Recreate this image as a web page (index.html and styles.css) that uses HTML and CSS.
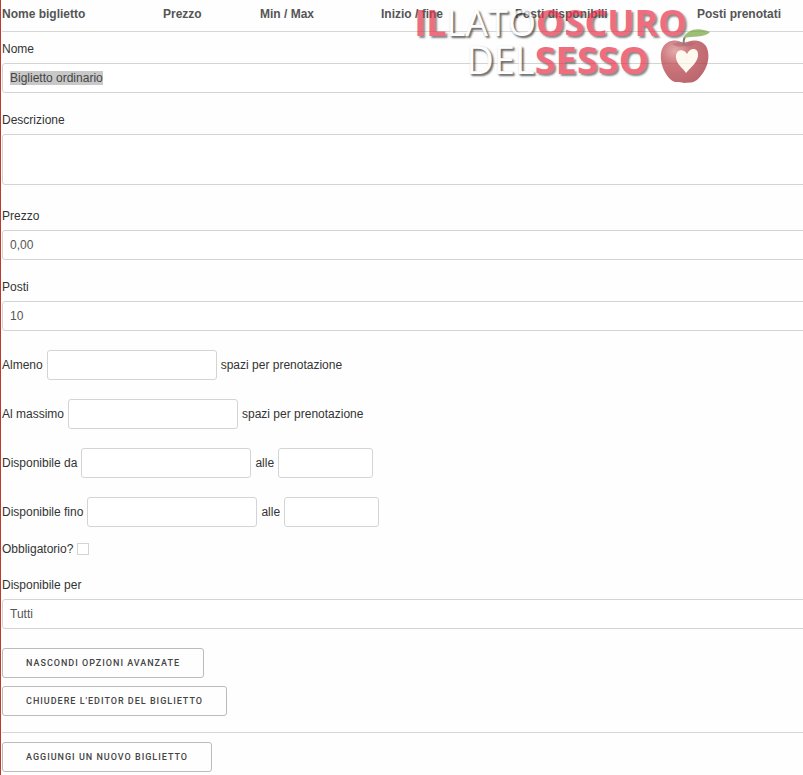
FILE: index.html
```html
<!DOCTYPE html>
<html lang="it">
<head>
  <meta charset="UTF-8">
  <meta name="viewport" content="width=device-width, initial-scale=1.0">
  <title>Biglietti</title>
  <link rel="stylesheet" href="styles.css">
</head>
<body>

  <form class="tickets">
    <table class="ticket-table">
      <thead>
        <tr>
          <th class="col-name">Nome biglietto</th>
          <th class="col-price">Prezzo</th>
          <th class="col-minmax">Min / Max</th>
          <th class="col-dates">Inizio / fine</th>
          <th class="col-available">Posti disponibili</th>
          <th>Posti prenotati</th>
        </tr>
      </thead>
      <tbody>
        <tr>
          <td colspan="6">
            <div class="field">
              <label for="ticket-name">Nome</label>
              <input type="text" id="ticket-name" value="Biglietto ordinario">
            </div>
            <div class="field">
              <label for="ticket-description">Descrizione</label>
              <textarea id="ticket-description"></textarea>
            </div>
            <div class="field">
              <label for="ticket-price">Prezzo</label>
              <input type="text" id="ticket-price" value="0,00">
            </div>
            <div class="field">
              <label for="ticket-spaces">Posti</label>
              <input type="text" id="ticket-spaces" value="10">
            </div>

            <div class="options">
              <div class="row">
                <label for="ticket-min">Almeno</label>
                <input type="text" id="ticket-min">
                <span>spazi per prenotazione</span>
              </div>
              <div class="row">
                <label for="ticket-max">Al massimo</label>
                <input type="text" id="ticket-max">
                <span>spazi per prenotazione</span>
              </div>
              <div class="row">
                <label for="ticket-start">Disponibile da</label>
                <input type="text" id="ticket-start">
                <label for="ticket-start-time">alle</label>
                <input type="text" class="time" id="ticket-start-time">
              </div>
              <div class="row">
                <label for="ticket-end">Disponibile fino</label>
                <input type="text" id="ticket-end">
                <label for="ticket-end-time">alle</label>
                <input type="text" class="time" id="ticket-end-time">
              </div>
            </div>

            <div class="row required">
              <label for="ticket-required">Obbligatorio?</label>
              <input type="checkbox" id="ticket-required">
            </div>

            <div class="field">
              <label for="ticket-type">Disponibile per</label>
              <select id="ticket-type">
                <option>Tutti</option>
              </select>
            </div>

            <div class="actions">
              <button type="button">Nascondi opzioni avanzate</button>
              <button type="button">Chiudere l'editor del biglietto</button>
            </div>
          </td>
        </tr>
      </tbody>
    </table>
    <div class="footer">
      <button type="button">Aggiungi un nuovo biglietto</button>
    </div>
  </form>

  <div class="watermark">
    <div class="mark-top"><b>IL</b><span>LATO</span><b>OSCURO</b></div>
    <div class="mark-bottom">
      <span>DEL</span><b>SESSO</b>
      <svg class="apple" width="52" height="58" viewBox="0 0 52 58" aria-hidden="true">
        <defs>
          <radialGradient id="skin" cx="30%" cy="25%" r="80%">
            <stop offset="0" stop-color="#d9888a"/>
            <stop offset="0.4" stop-color="#b83e46"/>
            <stop offset="1" stop-color="#a02530"/>
          </radialGradient>
        </defs>
        <path d="M25 16C20 11 9 11 4 19C-1 28 3 43 11 51C16 56 20 53 25 55C31 54 34 56 40 50C49 41 52 27 47 18C42 11 31 11 25 16Z" fill="url(#skin)"/>
        <path d="M13 16Q25 12 37 15Q31 20 25 18Q19 20 13 16Z" fill="#842830" opacity="0.5"/>
        <path d="M25 17Q24 12 26 9" fill="none" stroke="#5d4736" stroke-width="2"/>
        <path d="M24 10C29 1 39-1 51 4C45 10 34 8 24 10Z" fill="#75a33c"/>
        <path d="M28 26C25 20 16 21 17 30C18 37 24 40 27 45C32 39 40 33 39 26C39 20 31 19 28 26Z" fill="#fff6e8"/>
      </svg>
    </div>
  </div>

  <script>
    document.getElementById('ticket-name').select();
  </script>
</body>
</html>
```

FILE: styles.css
```css
* {
  box-sizing: border-box;
}
body {
  position: relative;
  margin: 0;
  padding-left: 1px;
  border-left: 1px solid #c0392b;
  background: #fefefe;
  color: #333;
  font-family: "Liberation Sans", Arial, sans-serif;
  font-size: 12px;
  line-height: 28px;
  overflow: hidden;
}
/* the form is wider than the panel it sits in */
.tickets {
  width: calc(100% + 16px);
  padding-bottom: 3px;
}
.ticket-table {
  width: 100%;
  border-collapse: collapse;
  table-layout: fixed;
}
.ticket-table th {
  height: 31px;
  padding: 0 0 2px;
  border-bottom: 1px solid #d6d6d6;
  color: #555;
  text-align: left;
  white-space: nowrap;
}
.ticket-table td {
  padding: 3px 0 16px;
  border-bottom: 1px solid #d6d6d6;
}
.col-name {
  width: 161px;
}
.col-price {
  width: 97px;
}
.col-minmax {
  width: 121px;
}
.col-dates {
  width: 134px;
}
.col-available {
  width: 182px;
}
.field {
  margin-bottom: 13px;
}
.field label {
  display: block;
}
input,
textarea,
select {
  display: block;
  height: 30px;
  margin: 0;
  padding: 0 7px;
  border: 1px solid #d3d5d5;
  border-radius: 3px;
  outline: none;
  background: #fff;
  color: #555;
  font: inherit;
}
.field input,
.field textarea,
.field select {
  width: 100%;
}
.field textarea {
  height: 51px;
  margin-bottom: 17px;
  resize: none;
}
select {
  appearance: none;
}
input::selection {
  background: #c8c8c8;
  color: #444;
}
.options {
  display: flex;
  flex-direction: column;
  gap: 19px;
  padding-top: 6px;
}
.row {
  display: flex;
  align-items: center;
  gap: 4px;
}
.row input {
  width: 170px;
}
.row .time {
  width: 95px;
}
.required {
  padding: 8px 0;
}
.required input {
  width: 12px;
  height: 12px;
  padding: 0;
  border-radius: 0;
  appearance: none;
}
.required input:checked {
  background: #555;
}
.actions {
  display: flex;
  flex-direction: column;
  align-items: flex-start;
  gap: 8px;
  padding-top: 6px;
}
button {
  height: 30px;
  padding: 0 23px;
  border: 1px solid #bbb;
  border-radius: 3px;
  background: #fefefe;
  color: #444;
  font-family: Roboto, sans-serif;
  font-size: 9px;
  font-weight: 500;
  letter-spacing: 1px;
  text-transform: uppercase;
  cursor: pointer;
}
.footer {
  display: flex;
  padding-top: 9px;
}
.watermark {
  position: absolute;
  top: 5px;
  right: 92px;
  color: #fefefe;
  font-family: "Open Sans", sans-serif;
  font-size: 38px;
  line-height: 36px;
  opacity: 0.7;
  text-shadow: 2px 2px 2px #555;
  pointer-events: none;
}
.watermark span {
  text-shadow: 2px 2px 2px #333, 1px 1px 2px #777;
}
.watermark b {
  color: #e8304a;
}
.mark-top,
.mark-bottom {
  display: flex;
  justify-content: flex-end;
}
.mark-top {
  padding-right: 24px;
  font-size: 36px;
}
.apple {
  margin: -13px 0 0 10px;
}
```
